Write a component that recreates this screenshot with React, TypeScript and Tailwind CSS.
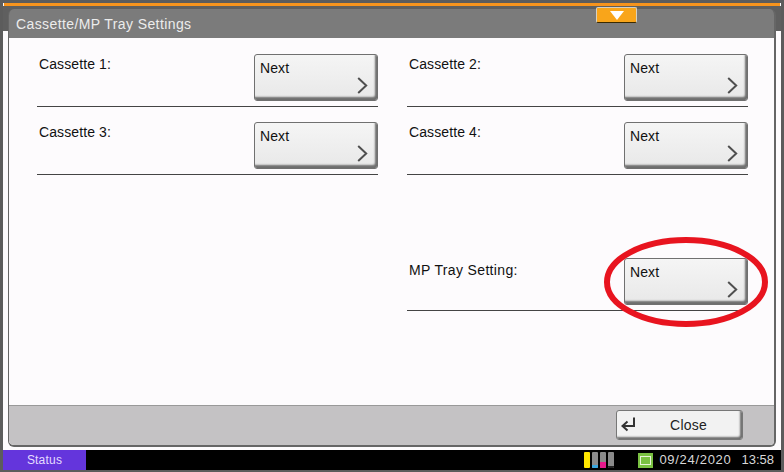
const font = { fontFamily: '"Liberation Sans", Arial, sans-serif' };

function NextButton() {
  return (
    <button className="relative h-[47px] w-[124px] shrink-0 rounded-[3px] border border-[#707070] bg-gradient-to-b from-[#f5f5f5] to-[#e8e8e8] text-left shadow-[inset_-2px_-3px_2px_#6e6e6e]">
      <span className="absolute left-[5px] top-[3px] text-[14px] leading-[20px] tracking-[0.1px] text-[#111]">Next</span>
      <svg className="absolute right-[9px] bottom-[6px]" width="11" height="17" viewBox="0 0 11 17" fill="none">
        <path d="M1.2 1 L9.2 8.5 L1.2 16" stroke="#4f4f4f" strokeWidth="2" />
      </svg>
    </button>
  );
}

function SettingRow({ label, labelClass = "tracking-[0.1px]" }: { label: string; labelClass?: string }) {
  return (
    <div className="flex h-[53px] w-[341px] items-start justify-between border-b border-[#444]">
      <span className={`pl-[2px] text-[14px] leading-[20px] text-[#111] ${labelClass}`}>{label}</span>
      <NextButton />
    </div>
  );
}

function Toner({ fill, level }: { fill: string; level: string }) {
  return (
    <div className="flex h-[16px] w-[6px] flex-col justify-end overflow-hidden rounded-[1px] bg-[#8a8a8a]">
      <div className={level} style={{ backgroundColor: fill }} />
    </div>
  );
}

export default function App() {
  return (
    <div style={font} className="relative h-[472px] w-[784px] overflow-hidden bg-[#fdfbfd]">
      <div className="flex h-full flex-col border-x-[3px] border-t-[3px] border-b-[2px] border-[#5c5c5c]">
        <div className="mx-[1px] h-[3px] shrink-0 bg-[#f7941d]" />
        <div className="min-h-0 flex-1 bg-[linear-gradient(#5f5f5f_25px,#fdfbfd_25px)] pl-[5px] pr-[5px] pt-[3px]">
          {/* main panel */}
          <div className="flex h-[438px] w-[768px] flex-col overflow-hidden rounded-[6px] border-r-[2px] border-b-[2px] border-l-[1px] border-[#666]">
            <div className="h-[29px] shrink-0 bg-[#7b7b7b] pl-[7px] pt-[5px] text-[14px] leading-[20px] tracking-[0.4px] text-[#ececec]">
              Cassette/MP Tray Settings
            </div>
            <div className="flex-1 bg-[#fdfbfd] pl-[28px] pt-[16px]">
              <div className="grid w-[711px] grid-cols-[341px_341px] gap-x-[29px] gap-y-[15px]">
                <SettingRow label="Cassette 1:" />
                <SettingRow label="Cassette 2:" />
                <SettingRow label="Cassette 3:" />
                <SettingRow label="Cassette 4:" />
                <div className="col-start-2 mt-[68px]">
                  <SettingRow label="MP Tray Setting:" labelClass="pt-[2px] tracking-[0.35px]" />
                </div>
              </div>
            </div>
            <div className="flex h-[40px] shrink-0 justify-end border-t-[1px] border-[#999] bg-[#c4c2c4] pr-[31px] pt-[4px]">
              <button className="relative flex h-[30px] w-[127px] items-center justify-center rounded-[3px] border border-[#777] bg-[#f2f2f2] pl-[18px] text-[14px] tracking-[0.2px] text-[#222] shadow-[inset_-2px_-2px_2px_#6e6e6e]">
                <svg className="absolute left-[3px] top-[5px]" width="17" height="17" viewBox="0 0 17 17" fill="none">
                  <path d="M14 1.5 V10 H3" stroke="#333" strokeWidth="2" />
                  <path d="M7.5 5.5 L2.5 10 L7.5 14.5" stroke="#333" strokeWidth="2" />
                </svg>
                Close
              </button>
            </div>
          </div>
        </div>
        {/* status bar */}
        <div className="flex h-[20px] shrink-0 items-center bg-black text-[#d8d8d8]">
          <div className="flex h-full w-[83px] items-center justify-center bg-[#6435dc] pb-[1px] text-[12px] tracking-[0.2px] text-[#e4dcff]">
            Status
          </div>
          <div className="ml-auto flex items-center pr-[7px] text-[13px]">
            <div className="mr-[24px] flex items-end gap-[2px]">
              <Toner fill="#ffe600" level="h-[16px]" />
              <Toner fill="#3aa5dc" level="h-[3px]" />
              <Toner fill="#e6198c" level="h-[6px]" />
              <Toner fill="#222" level="h-[2px]" />
            </div>
            <div className="mr-[6px] flex h-[15px] w-[15px] items-center justify-center bg-[#7ac142]">
              <div className="h-[9px] w-[11px] border border-[#e8f5d8]" />
            </div>
            <span className="tracking-[0.7px]">09/24/2020</span>
            <span className="ml-[10px]">13:58</span>
          </div>
        </div>
      </div>

      {/* orange drop-down tab */}
      <div className="absolute left-[596px] top-[7px] flex h-[16px] w-[41px] items-center justify-center rounded-[2px] border border-[#d8d0c0] border-b-[#3a2a00] bg-[#f9a51a]">
        <svg width="14" height="9" viewBox="0 0 14 9"><path d="M0 0 H14 L7 9 Z" fill="#fff" /></svg>
      </div>

      {/* red highlight */}
      <svg className="absolute left-[600px] top-[233px]" width="175" height="98" viewBox="0 0 175 98" fill="none">
        <ellipse cx="86" cy="49" rx="79" ry="42" stroke="#e8141f" strokeWidth="6" />
      </svg>
    </div>
  );
}
